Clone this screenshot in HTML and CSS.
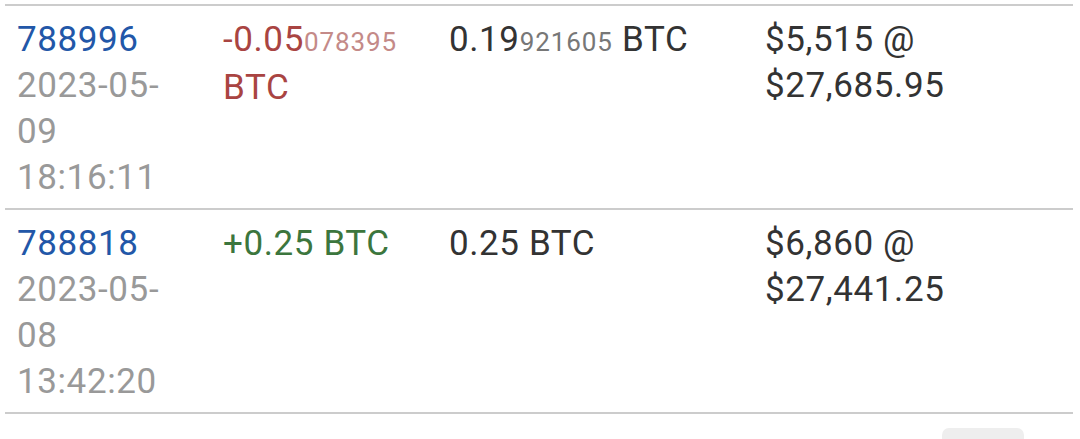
FILE: index.html
```html
<!DOCTYPE html>
<html lang="en">
<head>
    <meta charset="UTF-8">
    <meta name="viewport" content="width=device-width, initial-scale=1.0">
    <title>Transactions</title>
    <link rel="stylesheet" href="styles.css">
</head>
<body>
    <!-- Address transaction list -->
    <table class="tx-table">
        <colgroup>
            <col class="col-block">
            <col class="col-change">
            <col class="col-balance">
            <col class="col-value">
        </colgroup>
        <tr>
            <td>
                <a class="block-link" href="#">788996</a><br>
                <span class="tx-time">2023-05-09 18:16:11</span>
            </td>
            <td class="amount-out">-0.05<span class="dust">078395</span> BTC</td>
            <td class="balance">0.19<span class="dust">921605</span> BTC</td>
            <td class="value">$5,515 @ $27,685.95</td>
        </tr>
        <tr>
            <td>
                <a class="block-link" href="#">788818</a><br>
                <span class="tx-time">2023-05-08 13:42:20</span>
            </td>
            <td class="amount-in">+0.25 BTC</td>
            <td class="balance">0.25 BTC</td>
            <td class="value">$6,860 @ $27,441.25</td>
        </tr>
    </table>

    <div class="pager">
        <button class="pager-btn"></button>
    </div>
</body>
</html>
```

FILE: styles.css
```css
body {
    margin: 0;
    padding: 4px 7px 0 5px;
    background: #fff;
    font-family: Roboto, "Noto Sans", sans-serif;
    color: #333;
}

/* Transaction table */
.tx-table {
    width: 100%;
    border-collapse: collapse;
    table-layout: fixed;
    font-size: 35px;
    line-height: 46px;
    letter-spacing: 0.6px;
}

.col-block { width: 206px; }
.col-change { width: 226px; }
.col-balance { width: 316px; }

.tx-table td {
    vertical-align: top;
    padding: 11px 20px 7px 12px;
    border-top: 2px solid #cccccc;
    border-bottom: 2px solid #cccccc;
}

.block-link {
    color: #2257a8;
    text-decoration: none;
}

.tx-time {
    color: #999;
}

/* Trailing satoshi digits are drawn smaller */
.dust {
    font-size: 26px;
    letter-spacing: 0.9px;
}

.amount-out {
    color: #a94442;
}

.amount-out .dust {
    color: #c48a88;
}

.amount-in {
    color: #3c763d;
}

.balance .dust {
    color: #777;
}

/* Pagination button peeking in at the bottom */
.pager {
    display: flex;
    justify-content: flex-end;
    padding: 14px 49px 0 0;
}

.pager-btn {
    width: 82px;
    height: 40px;
    border: none;
    border-radius: 7px;
    background: #eeeeee;
}
```
